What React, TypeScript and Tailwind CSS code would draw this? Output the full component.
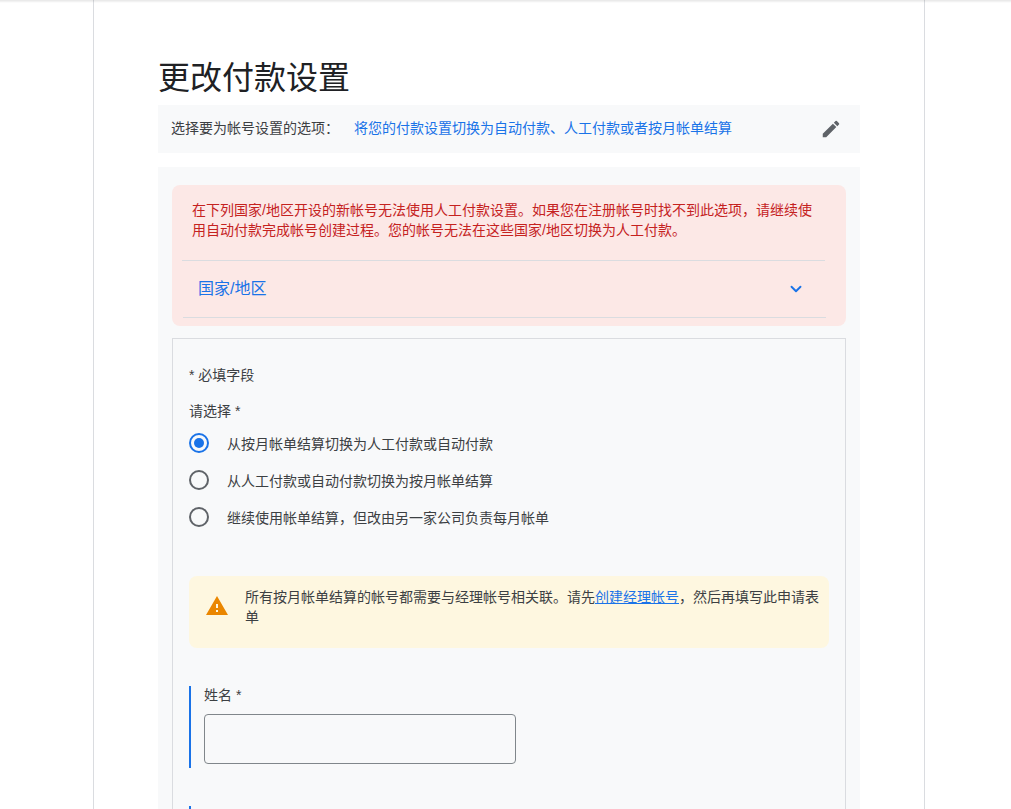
import { useState } from 'react';
import { ChevronDown } from 'lucide-react';

const options = [
  '从按月帐单结算切换为人工付款或自动付款',
  '从人工付款或自动付款切换为按月帐单结算',
  '继续使用帐单结算，但改由另一家公司负责每月帐单',
];

function Radio({ label, checked, onClick }: { label: string; checked: boolean; onClick: () => void }) {
  return (
    <button onClick={onClick} className="flex h-[37px] items-center text-left">
      <span
        className={`flex h-5 w-5 items-center justify-center rounded-full border-2 ${
          checked ? 'border-[#1a73e8]' : 'border-[#5f6368]'
        }`}
      >
        {checked && <span className="h-2.5 w-2.5 rounded-full bg-[#1a73e8]" />}
      </span>
      <span className="ml-[18px] pt-[2px] text-sm text-[#3c4043]">{label}</span>
    </button>
  );
}

export default function App() {
  const [selected, setSelected] = useState(0);

  return (
    <div
      className="relative h-[809px] overflow-hidden bg-white text-[#3c4043]"
      style={{ fontFamily: '"Liberation Sans", "Noto Sans CJK SC", sans-serif' }}
    >
      <div className="absolute inset-x-0 top-0 h-[3px] bg-gradient-to-b from-black/10 to-transparent" />
      <div className="ml-[93px] h-full w-[832px] border-x border-[#dadce0] px-[64px] pt-[57px]">
        <h1 className="text-[32px] leading-[42px] font-normal text-[#202124]">更改付款设置</h1>
        <div className="mt-[6px] flex h-[48px] items-center bg-[#f8f9fa] pl-[13px] pr-[18px] text-sm">
          <span className="w-[183px] pb-[2px]">选择要为帐号设置的选项：</span>
          <span className="pb-[2px] text-[#1a73e8]">将您的付款设置切换为自动付款、人工付款或者按月帐单结算</span>
          <svg viewBox="0 0 24 24" className="ml-auto h-[22px] w-[22px] fill-[#5f6368]">
            <path d="M3 17.25V21h3.75L17.81 9.94l-3.75-3.75L3 17.25zM20.71 7.04a1 1 0 0 0 0-1.41l-2.34-2.34a1 1 0 0 0-1.41 0l-1.83 1.83 3.75 3.75 1.83-1.83z" />
          </svg>
        </div>

        <div className="mt-[14px] h-[700px] bg-[#f8f9fa] px-[14px] pt-[18px]">
          <div className="h-[141px] rounded-lg bg-[#fce8e6] px-[10px] pt-[15px]">
            <p className="w-[630px] pl-[10px] text-sm leading-[20px] text-[#c5221f]">
              在下列国家/地区开设的新帐号无法使用人工付款设置。如果您在注册帐号时找不到此选项，请继续使用自动付款完成帐号创建过程。您的帐号无法在这些国家/地区切换为人工付款。
            </p>
            <div className="mt-[20px] flex h-[57px] w-[643px] items-center justify-between border-t border-[#dadce0] pl-[16px] pr-[20px] text-[#1a73e8]">
              <span className="text-base">国家/地区</span>
              <ChevronDown size={18} strokeWidth={2.5} />
            </div>
            <div className="ml-px w-[643px] border-t border-[#dadce0]" />
          </div>

          <div className="mt-[12px] h-[600px] border border-[#dadce0] px-[16px] pt-[26px]">
            <div className="text-sm leading-[20px]">* 必填字段</div>
            <div className="mt-[16px] text-sm leading-[20px]">请选择 *</div>
            <div className="mt-[3px] flex flex-col items-start">
              {options.map((o, i) => (
                <Radio key={o} label={o} checked={selected === i} onClick={() => setSelected(i)} />
              ))}
            </div>

            <div className="mt-[41px] flex h-[72px] w-[640px] rounded-lg bg-[#fef7e0] pl-[16px] pr-[8px] pt-[11px]">
              <svg viewBox="0 0 24 24" className="mt-[7px] h-[24px] w-[24px] shrink-0 fill-[#ea8600]">
                <path d="M1 21h22L12 2 1 21zm12-3h-2v-2h2v2zm0-4h-2v-4h2v4z" />
              </svg>
              <p className="ml-[16px] text-sm leading-[20px]">
                所有按月帐单结算的帐号都需要与经理帐号相关联。请先
                <span className="text-[#1a73e8] underline">创建经理帐号</span>
                ，然后再填写此申请表
                <br />单
              </p>
            </div>

            <div className="mt-[38px] h-[82px] border-l-2 border-[#1a73e8] pl-[13px]">
              <div className="text-sm leading-[18px]">姓名 *</div>
              <input
                type="text"
                className="mt-[10px] h-[50px] w-[312px] rounded border border-[#80868b] bg-transparent px-3 outline-none"
              />
            </div>
            <div className="mt-[38px] h-[82px] border-l-2 border-[#1a73e8]" />
          </div>
        </div>
      </div>
    </div>
  );
}
